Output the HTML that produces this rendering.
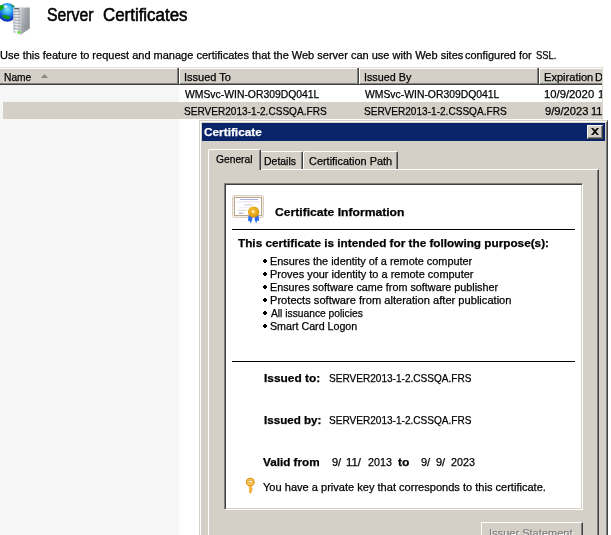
<!DOCTYPE html>
<html>
<head>
<meta charset="utf-8">
<title>Server Certificates</title>
<style>
html,body{margin:0;padding:0;}
body{width:611px;height:535px;overflow:hidden;background:#fff;position:relative;
  font-family:"Liberation Sans",sans-serif;font-size:11px;color:#000;}
.a{position:absolute;white-space:pre;line-height:13px;height:13px;transform-origin:0 0;-webkit-text-stroke:0.25px currentColor;}
#t1,#t2{-webkit-text-stroke:0.55px #000;}
.b{font-weight:bold;}
.x{position:absolute;box-sizing:border-box;}
.bl{position:absolute;left:263px;width:4px;height:2px;margin-top:1px;background:#000;}
.bl:after{content:"";position:absolute;left:1px;top:-1px;width:2px;height:4px;background:#000;}
</style>
</head>
<body>

<!-- sorted column tint -->
<div class="x" style="left:0;top:85px;width:179px;height:450px;background:#f6f6f6;"></div>

<svg class="x" style="left:0;top:0;" width="36" height="40" viewBox="0 0 36 40">
  <defs>
    <linearGradient id="sf" x1="0" y1="0" x2="1" y2="0">
      <stop offset="0" stop-color="#c9cdd2"/><stop offset="0.5" stop-color="#eef0f2"/><stop offset="1" stop-color="#b4b9bf"/>
    </linearGradient>
    <linearGradient id="ss" x1="0" y1="0" x2="1" y2="0.6">
      <stop offset="0" stop-color="#cfd3d6"/><stop offset="0.5" stop-color="#a1a5aa"/><stop offset="1" stop-color="#8d9298"/>
    </linearGradient>
    <radialGradient id="gl" cx="0.5" cy="0.33" r="0.75">
      <stop offset="0" stop-color="#8fe6ff"/><stop offset="0.3" stop-color="#35b4f4"/><stop offset="0.62" stop-color="#1450d6"/><stop offset="1" stop-color="#0a1cb0"/>
    </radialGradient>
    <filter id="bl" x="-20%" y="-20%" width="140%" height="140%"><feGaussianBlur stdDeviation="0.45"/></filter>
    <filter id="bl2" x="-20%" y="-20%" width="140%" height="140%"><feGaussianBlur stdDeviation="0.7"/></filter>
  </defs>
  <g filter="url(#bl)">
    <circle cx="7.3" cy="12.4" r="9.3" fill="url(#gl)"/>
    <path d="M-1,6.6 C1,4.6 3,4.8 4.4,6 C4,8 3,9.4 1.6,10.4 C0.5,10.8 -0.5,10 -1,6.6z" fill="#18a818"/>
    <path d="M1.6,15.8 C4.4,14.2 8.4,15.2 10.6,17.6 C8.8,20 4.6,20 1.6,15.8z" fill="#159a15"/>
    <path d="M11,4.4 c1.5,0.2 3,1.2 3.5,2.6 c-1.6,0.2 -2.8,-0.8 -3.5,-2.6z" fill="#1aa01a"/>
    <ellipse cx="5.6" cy="6.6" rx="2" ry="1.3" fill="#e8fbff" opacity="0.8"/>
  </g>
  <g filter="url(#bl)">
    <polygon points="13.2,7.6 20.6,7.0 20.6,34.8 13.2,32.8" fill="url(#sf)"/>
    <polygon points="20.6,7.0 29.8,7.6 29.8,28.4 20.6,34.8" fill="url(#ss)"/>
    <polygon points="13.2,7.6 21.6,6.6 29.8,7.6 20.6,8.2" fill="#dfe2e5"/>
    <rect x="14.4" y="8.2" width="4.6" height="1.1" fill="#3d444c"/>
    <g stroke="#8e969e" stroke-width="0.8">
      <line x1="13.6" y1="11.6" x2="20.2" y2="11.4"/>
      <line x1="13.6" y1="14.4" x2="20.2" y2="14.4"/>
      <line x1="13.6" y1="17.2" x2="20.2" y2="17.4"/>
      <line x1="13.6" y1="20.0" x2="20.2" y2="20.4"/>
      <line x1="13.6" y1="22.8" x2="20.2" y2="23.4"/>
      <line x1="13.6" y1="25.6" x2="20.2" y2="26.4"/>
      <line x1="13.6" y1="28.4" x2="20.2" y2="29.4"/>
    </g>
    <g stroke="#8f949a" stroke-width="0.5" opacity="0.8">
      <line x1="23.6" y1="28.6" x2="28.2" y2="25.6"/>
      <line x1="23.6" y1="29.8" x2="28.2" y2="26.8"/>
      <line x1="23.6" y1="27.4" x2="28.2" y2="24.4"/>
    </g>
    <circle cx="19" cy="32.2" r="1.25" fill="#4fe01e"/>
  </g>
</svg>


<!-- list header -->
<div class="x" style="left:0;top:67px;width:602px;height:18px;background:#d4d0c8;border-top:1px solid #e4e2dc;border-bottom:1px solid #404040;box-shadow:inset 0 1px 0 #fff, inset 0 -1px 0 #808080;"></div>
<div class="x" style="left:177px;top:68px;width:3px;height:16px;background:#404040;border-left:1px solid #808080;border-right:1px solid #fff;"></div>
<div class="x" style="left:357px;top:68px;width:3px;height:16px;background:#404040;border-left:1px solid #808080;border-right:1px solid #fff;"></div>
<div class="x" style="left:537px;top:68px;width:3px;height:16px;background:#404040;border-left:1px solid #808080;border-right:1px solid #fff;"></div>
<svg class="x" style="left:41px;top:74px;" width="7" height="4"><polygon points="3.5,0 7,4 0,4" fill="#8a8884"/></svg>

<!-- selected row -->
<div class="x" style="left:3px;top:102px;width:599px;height:17px;background:#d4d0c8;"></div>

<!-- dialog frame -->
<div class="x" style="left:199px;top:120px;width:409px;height:430px;background:#d4d0c8;border:1px solid #d4d0c8;border-right-color:#404040;box-shadow:inset 1px 1px 0 #fff, inset -1px 0 0 #808080;"></div>
<div class="x" style="left:202px;top:123px;width:403px;height:18px;background:#0a246a;"></div>
<!-- close btn -->
<div class="x" style="left:587px;top:125px;width:16px;height:14px;background:#d4d0c8;border:1px solid #fff;border-right-color:#404040;border-bottom-color:#404040;box-shadow:inset -1px -1px 0 #808080;"></div>
<svg class="x" style="left:591px;top:128px;" width="8" height="7"><path d="M0,0h2l2,2l2,-2h2l-3,3.5l3,3.5h-2l-2,-2l-2,2h-2l3,-3.5z" fill="#000"/></svg>

<!-- tab panel -->
<div class="x" style="left:208px;top:169px;width:391px;height:380px;background:#d4d0c8;border:1px solid #fff;border-right-color:#404040;box-shadow:inset -1px 0 0 #808080;"></div>
<!-- tabs -->
<div class="x" style="left:260px;top:151px;width:43px;height:18px;border-top:1px solid #fff;border-right:1px solid #404040;border-radius:0 2px 0 0;box-shadow:inset -1px 0 0 #808080;"></div>
<div class="x" style="left:303px;top:151px;width:95px;height:18px;border-top:1px solid #fff;border-left:1px solid #fff;border-right:1px solid #404040;border-radius:2px 2px 0 0;box-shadow:inset -1px 0 0 #808080;"></div>
<div class="x" style="left:208px;top:149px;width:53px;height:21px;background:#d4d0c8;border-top:1px solid #fff;border-left:1px solid #fff;border-right:1px solid #404040;border-radius:2px 2px 0 0;box-shadow:inset -1px 0 0 #808080;"></div>

<!-- white info box -->
<div class="x" style="left:224px;top:183px;width:359px;height:327px;background:#fff;border:1px solid #808080;border-right-color:#fff;border-bottom-color:#fff;box-shadow:inset 1px 1px 0 #404040, inset -1px -1px 0 #d4d0c8;"></div>

<svg class="x" style="left:232px;top:195px;" width="32" height="29" viewBox="0 0 32 29">
  <defs>
    <radialGradient id="sg" cx="0.45" cy="0.42" r="0.6">
      <stop offset="0" stop-color="#fbe690"/><stop offset="0.35" stop-color="#f3bf35"/><stop offset="0.8" stop-color="#dd9a12"/><stop offset="1" stop-color="#c9880c"/>
    </radialGradient>
    <filter id="cb" x="-10%" y="-10%" width="120%" height="120%"><feGaussianBlur stdDeviation="0.35"/></filter>
  </defs>
  <g filter="url(#cb)">
  <rect x="0.5" y="0.5" width="31" height="22" rx="1.5" fill="#f3ede4" stroke="#cfc2b2" stroke-width="1" stroke-dasharray="1.3 0.5"/>
  <rect x="2.5" y="2.5" width="27" height="18" fill="#fff" stroke="#b9a68f" stroke-width="1"/>
  <rect x="8" y="4" width="18" height="0.9" fill="#a4a6dc"/>
  <rect x="5" y="6.4" width="23" height="1" fill="#e6e0f6"/>
  <rect x="12" y="9.5" width="8.5" height="0.9" fill="#c0c0ce"/>
  <rect x="7" y="12" width="19" height="0.8" fill="#ececf4"/>
  <rect x="6" y="14.8" width="9" height="0.9" fill="#d0d0d6"/>
  <rect x="7" y="17.7" width="2.5" height="1" fill="#7f98e0"/>
  <rect x="9.5" y="17.7" width="2.5" height="1" fill="#e2b8b8"/>
  <polygon points="16.4,20.5 20.4,20.5 20.2,25 18.6,28.4 17.6,25.6 16,26.4" fill="#2a6cf0"/>
  <polygon points="22.6,20.5 26.6,20.5 27.2,26 25.2,25.4 24.2,28.4 22.8,25" fill="#2a6cf0"/>
  <circle cx="21.6" cy="17" r="5.6" fill="url(#sg)"/>
  <circle cx="21.6" cy="17" r="3" fill="none" stroke="#e9a81e" stroke-width="0.9"/>
  <circle cx="21.2" cy="16.8" r="1.1" fill="#fdf0b0"/>
  </g>
</svg>


<div class="x" style="left:232px;top:229px;width:343px;height:1px;background:#000;"></div>
<div class="x" style="left:232px;top:361px;width:343px;height:1px;background:#000;"></div>

<div class="bl" style="top:259px;"></div>
<div class="bl" style="top:272px;"></div>
<div class="bl" style="top:285px;"></div>
<div class="bl" style="top:298px;"></div>
<div class="bl" style="top:311px;"></div>
<div class="bl" style="top:324px;"></div>

<svg class="x" style="left:245px;top:477px;" width="11" height="18" viewBox="0 0 11 18">
  <defs><filter id="kb" x="-20%" y="-20%" width="140%" height="140%"><feGaussianBlur stdDeviation="0.3"/></filter></defs>
  <g filter="url(#kb)">
  <ellipse cx="5.3" cy="4.9" rx="3.9" ry="3.7" fill="#f9c94c" stroke="#dd8c18" stroke-width="1.1"/>
  <rect x="3.3" y="3.5" width="4" height="2" rx="0.7" fill="#fff" stroke="#c98a24" stroke-width="0.6"/>
  <path d="M4.3,8.6 h2.2 v2.6 h0.7 v0.8 h-0.7 v0.8 h0.7 v0.8 h-0.7 v1.6 l-1.1,1.3 l-1.1,-1.3z" fill="#f6b436" stroke="#e0901c" stroke-width="0.4"/>
  </g>
</svg>

<!-- issuer statement button -->
<div class="x" style="left:481px;top:522px;width:102px;height:24px;background:#d4d0c8;border:1px solid #fff;border-right-color:#404040;box-shadow:inset -1px 0 0 #808080;"></div>

<div class="a" id="desc" style="left:0.00px;top:49px;transform:scaleX(1.0005);">Use this feature to request and manage certificates that the Web server can use with Web sites</div>
<div class="a" id="desc3" style="left:465.20px;top:49px;transform:scaleX(0.9912);">configured for</div>
<div class="a" id="desc2" style="left:536.40px;top:49px;transform:scaleX(0.8545);">SSL.</div>
<div class="a" id="t1" style="left:47.10px;top:4px;font-size:17.5px;line-height:22px;height:22px;transform:scaleX(0.9020);">Server</div>
<div class="a" id="t2" style="left:103.00px;top:4px;font-size:17.5px;line-height:22px;height:22px;transform:scaleX(0.9655);">Certificates</div>
<div class="a" id="h1" style="left:4.07px;top:71px;transform:scaleX(0.9286);">Name</div>
<div class="a" id="h2" style="left:184.00px;top:71px;transform:scaleX(1.0005);">Issued To</div>
<div class="a" id="h3" style="left:364.02px;top:71px;transform:scaleX(0.9787);">Issued By</div>
<div class="a" id="h4" style="left:543.99px;top:71px;transform:scaleX(1.0064);">Expiration</div>
<div class="a" id="h4b" style="left:595.00px;top:71px;transform:scaleX(1.0005);">D</div>
<div class="a" id="r1a" style="left:185.00px;top:88px;transform:scaleX(0.9437);">WMSvc-WIN-OR309DQ041L</div>
<div class="a" id="r1b" style="left:365.00px;top:88px;transform:scaleX(0.9437);">WMSvc-WIN-OR309DQ041L</div>
<div class="a" id="r1c" style="left:543.98px;top:88px;transform:scaleX(1.0250);">10/9/2020</div>
<div class="a" id="r1d" style="left:597.60px;top:88px;transform:scaleX(1.0005);">1</div>
<div class="a" id="r2a" style="left:184.08px;top:105px;transform:scaleX(0.9161);">SERVER2013-1-2.CSSQA.FRS</div>
<div class="a" id="r2b" style="left:364.08px;top:105px;transform:scaleX(0.9161);">SERVER2013-1-2.CSSQA.FRS</div>
<div class="a" id="r2c" style="left:545.00px;top:105px;transform:scaleX(1.0116);">9/9/2023</div>
<div class="a" id="r2d" style="left:591.20px;top:105px;transform:scaleX(1.0005);">11</div>
<div class="a b" id="dt" style="left:204.00px;top:126px;transform:scaleX(1.0741);color:#fff;">Certificate</div>
<div class="a" id="tb1" style="left:216.00px;top:153px;transform:scaleX(0.9333);">General</div>
<div class="a" id="tb2" style="left:264.05px;top:155px;transform:scaleX(0.9515);">Details</div>
<div class="a" id="tb3" style="left:309.00px;top:155px;transform:scaleX(0.9928);">Certification Path</div>
<div class="a b" id="ci" style="left:275.00px;top:206px;transform:scaleX(1.1026);">Certificate Information</div>
<div class="a b" id="p0" style="left:237.83px;top:237px;transform:scaleX(1.0690);">This certificate is intended for the following purpose(s):</div>
<div class="a" id="b1" style="left:270.01px;top:255px;transform:scaleX(0.9902);">Ensures the identity of a remote computer</div>
<div class="a" id="b2" style="left:270.00px;top:268px;transform:scaleX(0.9966);">Proves your identity to a remote computer</div>
<div class="a" id="b3" style="left:270.02px;top:281px;transform:scaleX(0.9819);">Ensures software came from software publisher</div>
<div class="a" id="b4" style="left:269.99px;top:294px;transform:scaleX(1.0101);">Protects software from alteration after publication</div>
<div class="a" id="b5" style="left:271.00px;top:307px;transform:scaleX(0.9327);">All issuance policies</div>
<div class="a" id="b6" style="left:270.03px;top:320px;transform:scaleX(0.9705);">Smart Card Logon</div>
<div class="a b" id="it" style="left:263.83px;top:372px;transform:scaleX(1.0824);">Issued to:</div>
<div class="a" id="itv" style="left:329.09px;top:372px;transform:scaleX(0.9148);">SERVER2013-1-2.CSSQA.FRS</div>
<div class="a b" id="ib" style="left:263.82px;top:414px;transform:scaleX(1.0556);">Issued by:</div>
<div class="a" id="ibv" style="left:329.09px;top:414px;transform:scaleX(0.9148);">SERVER2013-1-2.CSSQA.FRS</div>
<div class="a b" id="vf" style="left:263.17px;top:456px;transform:scaleX(1.0642);">Valid from</div>
<div class="a" id="v1" style="left:332.00px;top:456px;transform:scaleX(1.0005);">9/</div>
<div class="a" id="v2" style="left:346.16px;top:456px;transform:scaleX(1.0286);">11/</div>
<div class="a" id="v3" style="left:368.00px;top:456px;transform:scaleX(0.9750);">2013</div>
<div class="a b" id="vt" style="left:398.00px;top:456px;transform:scaleX(1.1000);">to</div>
<div class="a" id="v4" style="left:421.00px;top:456px;transform:scaleX(1.0005);">9/</div>
<div class="a" id="v5" style="left:436.00px;top:456px;transform:scaleX(1.0005);">9/</div>
<div class="a" id="v6" style="left:451.00px;top:456px;transform:scaleX(0.9750);">2023</div>
<div class="a" id="kt" style="left:263.00px;top:481px;transform:scaleX(1.0050);">You have a private key that corresponds to this certificate.</div>
<div class="a" id="bt" style="left:489.00px;top:527px;transform:scaleX(1.0049);color:#808080;text-shadow:1px 1px 0 #fff;">Issuer Statement</div>

<!-- clip table text at right edge -->
<div class="x" style="left:602px;top:0;width:9px;height:120px;background:#fff;"></div>
<div class="x" style="left:602px;top:67px;width:1px;height:53px;background:#dcd9d3;"></div>

</body>
</html>
